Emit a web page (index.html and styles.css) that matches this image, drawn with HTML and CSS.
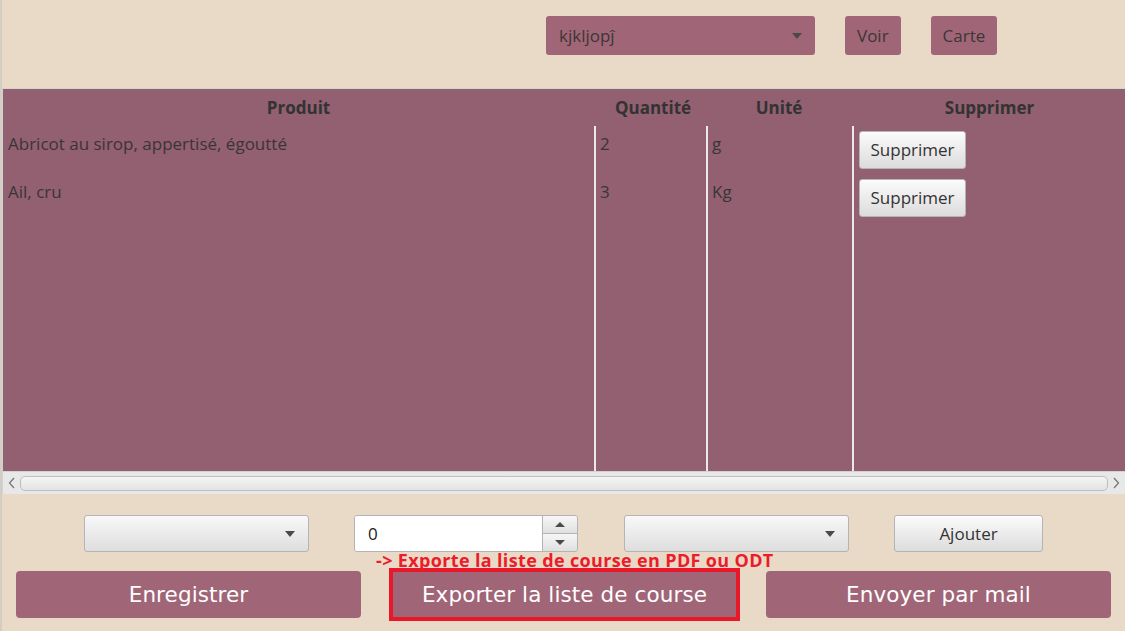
FILE: index.html
```html
<!DOCTYPE html>
<html lang="fr">
<head>
<meta charset="utf-8">
<link rel="stylesheet" href="styles.css">
</head>
<body>
<div class="app">
  <div class="edge"></div>
  <div class="topbar">
    <div class="menu-select">
      <span>kjkljopĵ</span>
      <svg class="caret" width="12" height="8" viewBox="0 0 12 8"><path d="M1 1h10L6 7z" fill="#4a4a4a"/></svg>
    </div>
    <div class="menu-btn">Voir</div>
    <div class="menu-btn">Carte</div>
  </div>

  <div class="table">
    <div class="thead">
      <div class="c c1">Produit</div>
      <div class="c c2">Quantité</div>
      <div class="c c3">Unité</div>
      <div class="c c4">Supprimer</div>
    </div>
    <div class="tbody">
      <div class="col c1">
        <div class="cell">Abricot au sirop, appertisé, égoutté</div>
        <div class="cell">Ail, cru</div>
      </div>
      <div class="col c2 sep">
        <div class="cell">2</div>
        <div class="cell">3</div>
      </div>
      <div class="col c3 sep">
        <div class="cell">g</div>
        <div class="cell">Kg</div>
      </div>
      <div class="col c4 sep">
        <div class="cell"><div class="fx-btn del">Supprimer</div></div>
        <div class="cell"><div class="fx-btn del">Supprimer</div></div>
      </div>
    </div>
    <div class="hscroll">
      <svg width="8" height="12" viewBox="0 0 8 12"><path d="M6 1L1.5 6 6 11" fill="none" stroke="#777" stroke-width="1.3"/></svg>
      <div class="thumb"></div>
      <svg width="8" height="12" viewBox="0 0 8 12"><path d="M2 1l4.5 5L2 11" fill="none" stroke="#777" stroke-width="1.3"/></svg>
    </div>
  </div>

  <div class="controls">
    <div class="fx-combo"><svg width="12" height="8" viewBox="0 0 12 8"><path d="M1 1h10L6 7z" fill="#4a4a4a"/></svg></div>
    <div class="spinner">
      <div class="spin-field">0</div>
      <div class="spin-btns">
        <div class="spin-b"><svg width="12" height="7" viewBox="0 0 12 7"><path d="M1 6h10L6 1z" fill="#4a4a4a"/></svg></div>
        <div class="spin-b"><svg width="12" height="7" viewBox="0 0 12 7"><path d="M1 1h10L6 6z" fill="#4a4a4a"/></svg></div>
      </div>
    </div>
    <div class="fx-combo"><svg width="12" height="8" viewBox="0 0 12 8"><path d="M1 1h10L6 7z" fill="#4a4a4a"/></svg></div>
    <div class="fx-btn add">Ajouter</div>
  </div>

  <div class="actions">
    <div class="big-btn">Enregistrer</div>
    <div class="highlight"><div class="big-btn inner">Exporter la liste de course</div></div>
    <div class="big-btn">Envoyer par mail</div>
  </div>

  <div class="note">-&gt; Exporte la liste de course en PDF ou ODT</div>
</div>
</body>
</html>
```

FILE: styles.css
```css
* { box-sizing: border-box; }
html, body { margin: 0; padding: 0; }
body {
  width: 1125px;
  height: 631px;
  overflow: hidden;
  background: #e9d9c7;
  font-family: "Open Sans", "Noto Sans", sans-serif;
  color: #3a3535;
}
.app { position: relative; width: 1125px; height: 631px; }
.edge {
  position: absolute; left: 0; top: 0; width: 2px; height: 631px;
  background: #d4cdc4;
}

.topbar {
  height: 88px;
  display: flex;
  align-items: flex-start;
  padding: 16px 0 0 546px;
  gap: 30px;
}
.menu-select {
  width: 269px; height: 39px;
  background: #a06677;
  border-radius: 3px;
  display: flex; align-items: center; justify-content: space-between;
  padding: 0 12px 0 13px;
  font-size: 17px;
  color: #3c3636;
}
.menu-select .caret { margin-top: 1px; }
.menu-btn {
  height: 39px;
  background: #a06677;
  border-radius: 3px;
  display: flex; align-items: center;
  padding: 0 12px;
  font-size: 17px;
  color: #3c3636;
}

.table {
  margin-left: 2px;
  width: 1123px;
  height: 406px;
  border-top: 1px solid #cfd2d6;
  border-left: 1px solid #cfd2d6;
  background: #926070;
  display: flex; flex-direction: column;
}
.thead { display: flex; height: 37px; align-items: center; }
.thead .c { text-align: center; font-weight: 700; font-size: 17px; color: #333; }
.c1 { width: 591px; }
.c2 { width: 112px; }
.c3 { width: 146px; }
.c4 { flex: 1; }
.thead .c2 { padding-left: 6px; }
.thead .c4 { padding-left: 2px; }
.tbody { display: flex; flex: 1; }
.col { display: flex; flex-direction: column; }
.col.sep { border-left: 2px solid #eee8ea; }
.cell {
  height: 48px;
  padding: 7px 0 0 5px;
  font-size: 17px;
  color: #3a3535;
  line-height: 22px;
}
.col.sep .cell { padding-left: 4px; }
.col.c4 .cell { padding: 5px 0 0 5px; }

.fx-btn {
  display: flex; align-items: center; justify-content: center;
  border: 1px solid #b4b4b4;
  border-radius: 3px;
  background: linear-gradient(#fbfbfb, #dcdcdc);
  box-shadow: inset 0 1px 0 #fff;
  font-size: 17px;
  color: #333;
}
.fx-btn.del { width: 107px; height: 38px; }

.hscroll {
  height: 23px;
  background: #e8e8e8;
  border-top: 1px solid #d2d2d2;
  display: flex; align-items: center;
  padding: 0 5px 0 5px;
  gap: 4px;
}
.thumb {
  flex: 1; height: 15px;
  border: 1px solid #bdbdbd;
  border-radius: 5px;
  background: linear-gradient(#f5f5f5, #e3e3e3);
}

.controls {
  display: flex; align-items: flex-start;
  padding: 21px 0 0 84px;
  height: 57px;
}
.fx-combo {
  width: 225px; height: 37px;
  border: 1px solid #b4b4b4; border-radius: 3px;
  background: linear-gradient(#f8f8f8, #dedede);
  display: flex; align-items: center; justify-content: flex-end;
  padding-right: 12px;
}
.spinner {
  margin: 0 46px 0 45px;
  width: 224px; height: 37px;
  display: flex;
  border: 1px solid #b4b4b4; border-radius: 3px;
  overflow: hidden;
}
.spin-field {
  flex: 1; background: #fff;
  font-size: 17px; color: #222;
  display: flex; align-items: center; padding-left: 13px;
}
.spin-btns { width: 35px; display: flex; flex-direction: column; border-left: 1px solid #b4b4b4; }
.spin-b {
  flex: 1; display: flex; align-items: center; justify-content: center;
  background: linear-gradient(#f6f6f6, #e0e0e0);
}
.spin-b + .spin-b { border-top: 1px solid #b4b4b4; }
.fx-btn.add { width: 149px; height: 37px; margin-left: 45px; }

.actions {
  display: flex; align-items: flex-start;
  padding: 20px 0 0 16px;
}
.big-btn {
  width: 345px; height: 47px;
  background: #a06677;
  border-radius: 4px;
  display: flex; align-items: center; justify-content: center;
  color: #fff;
  font-family: "DejaVu Sans", "Noto Sans", sans-serif;
  font-size: 21.5px;
  letter-spacing: 0.1px;
}
.highlight {
  margin: -3px 26px 0 28px;
  border: 4px solid #e8182a;
  width: 351px; height: 53px;
}
.big-btn.inner { width: 343px; height: 45px; border-radius: 0; }

.note {
  position: absolute;
  left: 376px; top: 548px;
  font-size: 18px; font-weight: 700;
  color: #ec1c2a;
  letter-spacing: 0.35px;
}
```
